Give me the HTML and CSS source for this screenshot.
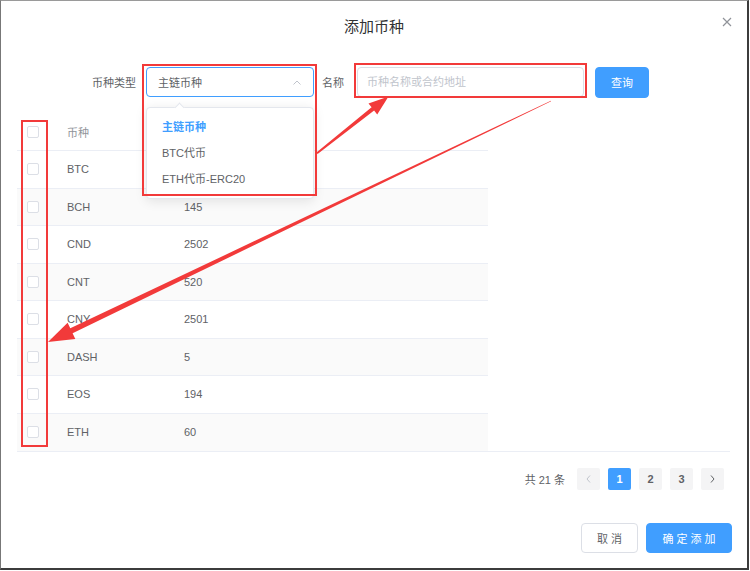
FILE: index.html
```html
<!DOCTYPE html>
<html lang="zh-CN">
<head>
    <meta charset="UTF-8">
    <meta name="viewport" content="width=device-width, initial-scale=1.0">
    <title>添加币种</title>
    <link rel="stylesheet" href="styles.css">
</head>
<body>
    <div class="dialog">
        <div class="dialog-header">
            <span></span>
            <span class="dialog-title">添加币种</span>
            <button class="dialog-close">
                <svg width="10" height="10" viewBox="0 0 10 10"><path d="M1 1L9 9M9 1L1 9" stroke="#909399" stroke-width="1.2" fill="none"/></svg>
            </button>
        </div>

        <div class="dialog-body">
            <div class="search-form">
                <label class="form-label type-label">币种类型</label>
                <div class="select-wrap">
                    <div class="select is-focus">
                        <span>主链币种</span>
                        <svg class="select-arrow" width="8" height="5" viewBox="0 0 8 5"><path d="M0.5 4.5L4 1L7.5 4.5" stroke="#c0c4cc" stroke-width="1" fill="none"/></svg>
                    </div>
                    <ul class="select-dropdown">
                        <li class="selected">主链币种</li>
                        <li>BTC代币</li>
                        <li>ETH代币-ERC20</li>
                    </ul>
                </div>
                <label class="form-label name-label">名称</label>
                <input class="text-input" type="text" placeholder="币种名称或合约地址">
                <button class="btn btn-primary btn-search">查询</button>
            </div>

            <div class="coin-table">
                <div class="row head">
                    <div class="cell check"><span class="checkbox"></span></div>
                    <div class="cell name">币种</div>
                    <div class="cell code"></div>
                </div>
                <div class="row">
                    <div class="cell check"><span class="checkbox"></span></div>
                    <div class="cell name">BTC</div>
                    <div class="cell code"></div>
                </div>
                <div class="row striped">
                    <div class="cell check"><span class="checkbox"></span></div>
                    <div class="cell name">BCH</div>
                    <div class="cell code">145</div>
                </div>
                <div class="row">
                    <div class="cell check"><span class="checkbox"></span></div>
                    <div class="cell name">CND</div>
                    <div class="cell code">2502</div>
                </div>
                <div class="row striped">
                    <div class="cell check"><span class="checkbox"></span></div>
                    <div class="cell name">CNT</div>
                    <div class="cell code">520</div>
                </div>
                <div class="row">
                    <div class="cell check"><span class="checkbox"></span></div>
                    <div class="cell name">CNY</div>
                    <div class="cell code">2501</div>
                </div>
                <div class="row striped">
                    <div class="cell check"><span class="checkbox"></span></div>
                    <div class="cell name">DASH</div>
                    <div class="cell code">5</div>
                </div>
                <div class="row">
                    <div class="cell check"><span class="checkbox"></span></div>
                    <div class="cell name">EOS</div>
                    <div class="cell code">194</div>
                </div>
                <div class="row striped">
                    <div class="cell check"><span class="checkbox"></span></div>
                    <div class="cell name">ETH</div>
                    <div class="cell code">60</div>
                </div>
            </div>

            <div class="pagination">
                <span class="total">共 21 条</span>
                <button class="page-btn disabled">
                    <svg width="5" height="8" viewBox="0 0 5 8"><path d="M4 0.5L1 4L4 7.5" stroke="#c0c4cc" stroke-width="1" fill="none"/></svg>
                </button>
                <button class="page-btn active">1</button>
                <button class="page-btn">2</button>
                <button class="page-btn">3</button>
                <button class="page-btn">
                    <svg width="5" height="8" viewBox="0 0 5 8"><path d="M1 0.5L4 4L1 7.5" stroke="#606266" stroke-width="1" fill="none"/></svg>
                </button>
            </div>
        </div>

        <div class="dialog-footer">
            <button class="btn btn-default">取消</button>
            <button class="btn btn-primary btn-confirm">确定添加</button>
        </div>

        <!-- annotation marks drawn over the screenshot -->
        <svg class="marks" width="749" height="570" viewBox="0 0 749 570">
            <g fill="none" stroke="#f23a3a" stroke-width="2">
                <rect x="143" y="65" width="173" height="130"/>
                <rect x="355" y="64" width="231" height="33"/>
                <rect x="22" y="121" width="25" height="325"/>
            </g>
            <g fill="#f23a3a">
                <polygon points="316.4,152.5 371.6,107.3 368.5,103.4 388.5,96.5 377.2,114.4 374.1,110.5 317.6,154.1"/>
                <polygon points="550.9,100.7 70.3,328.3 67.6,322.7 48,342 75.3,338.9 72.6,333.2 551.1,101.3"/>
            </g>
        </svg>
    </div>
</body>
</html>
```

FILE: styles.css
```css
* {
    box-sizing: border-box;
}
body {
    margin: 0;
    background-color: #fff;
    font-family: "Liberation Sans", "Noto Sans CJK SC", sans-serif;
    font-size: 11px;
    color: #606266;
}
button, input {
    font-family: inherit;
}
.dialog {
    position: relative;
    width: 749px;
    height: 570px;
    background-color: #fff;
    border-top: 1px solid #9a9a9a;
    border-left: 1px solid #777;
    border-right: 2px solid #3c3c3c;
    border-bottom: 2px solid #3c3c3c;
    display: flex;
    flex-direction: column;
}
.dialog-header {
    display: grid;
    grid-template-columns: 1fr auto 1fr;
    align-items: center;
    height: 49px;
}
.dialog-title {
    font-size: 15px;
    color: #303133;
}
.dialog-close {
    justify-self: end;
    margin-right: 15px;
    margin-top: -7px;
    padding: 0;
    border: none;
    background: none;
    display: flex;
}
.dialog-body {
    padding: 17px 0 0 16px;
}
.search-form {
    display: flex;
    align-items: center;
    height: 30px;
}
.form-label {
    color: #606266;
    font-size: 11px;
}
.type-label {
    width: 129px;
    text-align: right;
    padding-right: 10px;
}
.name-label {
    margin-left: 8px;
    margin-right: 13px;
}
.select-wrap {
    position: relative;
    width: 168px;
    height: 30px;
}
.select {
    height: 30px;
    border: 1px solid #dcdfe6;
    border-radius: 4px;
    padding: 0 10px 0 11px;
    display: flex;
    align-items: center;
    justify-content: space-between;
    color: #606266;
}
.select.is-focus {
    border-color: #409eff;
}
.select-arrow {
    margin-right: 2px;
}
.select-dropdown {
    position: absolute;
    top: 40px;
    left: 0;
    width: 168px;
    margin: 0;
    padding: 6px 0;
    list-style: none;
    background-color: #fff;
    border: 1px solid #e4e7ed;
    border-radius: 4px;
    box-shadow: 0 2px 12px rgba(0, 0, 0, 0.1);
    z-index: 5;
}
.select-dropdown::before {
    content: "";
    position: absolute;
    top: -4px;
    left: 29px;
    width: 6px;
    height: 6px;
    background-color: #fff;
    border-left: 1px solid #e4e7ed;
    border-top: 1px solid #e4e7ed;
    transform: rotate(45deg);
}
.select-dropdown li {
    height: 26px;
    line-height: 26px;
    padding-left: 15px;
    color: #606266;
}
.select-dropdown li.selected {
    color: #409eff;
    font-weight: bold;
}
.text-input {
    width: 227px;
    height: 30px;
    border: 1px solid #dcdfe6;
    border-radius: 4px;
    padding: 0 9px;
    font-size: 11px;
    color: #606266;
    outline: none;
}
.text-input::placeholder {
    color: #c0c4cc;
}
.btn {
    height: 30px;
    border-radius: 4px;
    font-size: 11px;
    cursor: pointer;
    padding: 0;
}
.btn-primary {
    background-color: #409eff;
    border: 1px solid #409eff;
    color: #fff;
}
.btn-default {
    background-color: #fff;
    border: 1px solid #dcdfe6;
    color: #606266;
}
.btn-search {
    width: 54px;
    height: 31px;
    margin-left: 11px;
}
.coin-table {
    margin-top: 16.5px;
    width: 713px;
    border-bottom: 1px solid #ebeef5;
}
.row {
    display: flex;
    width: 471px;
    height: 37.5px;
    border-bottom: 1px solid #ebeef5;
}
.row:last-child {
    border-bottom: none;
}
.row.striped {
    background-color: #fafafa;
}
.cell {
    display: flex;
    align-items: center;
    padding-left: 10px;
}
.cell.check {
    width: 40px;
}
.cell.name {
    width: 117px;
}
.cell.code {
    flex: 1;
}
.row.head .cell {
    color: #909399;
}
.checkbox {
    width: 12px;
    height: 12px;
    border: 1px solid #dcdfe6;
    border-radius: 2px;
    background-color: #fff;
}
.pagination {
    display: flex;
    justify-content: flex-end;
    align-items: center;
    gap: 8px;
    margin-top: 16px;
    padding-right: 23px;
}
.total {
    margin-right: 4px;
    color: #606266;
}
.page-btn {
    width: 23px;
    height: 22px;
    border: none;
    border-radius: 2px;
    background-color: #f4f4f5;
    color: #606266;
    font-size: 11px;
    font-weight: bold;
    display: flex;
    align-items: center;
    justify-content: center;
    padding: 0;
}
.page-btn.active {
    background-color: #409eff;
    color: #fff;
}
.dialog-footer {
    display: flex;
    justify-content: flex-end;
    gap: 8px;
    margin-top: 33px;
    padding-right: 15px;
}
.btn-default,
.btn-confirm {
    letter-spacing: 3px;
    padding-left: 3px;
}
.btn-default {
    width: 57px;
}
.btn-confirm {
    width: 86px;
}
.marks {
    position: absolute;
    top: -1px;
    left: -1px;
    pointer-events: none;
    z-index: 10;
}
```
